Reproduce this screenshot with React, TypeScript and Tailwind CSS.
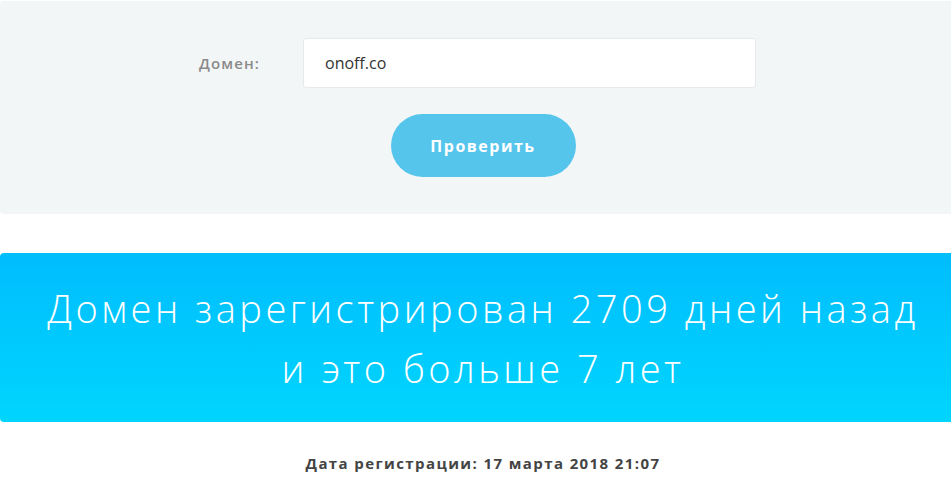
import React from "react";

export default function App() {
  return (
    <div className="w-[951px] h-[487px] overflow-hidden bg-white" style={{ fontFamily: '"Open Sans", "Noto Sans", sans-serif' }}>
      <div className="w-[966px] pt-px">
        <div className="bg-[#f3f6f7] rounded-[4px] h-[213px] flex flex-col items-center pt-[37px]">
          <div className="flex items-center w-[966px]">
            <label className="w-[303px] pl-[199px] text-[15px] font-semibold tracking-[1.1px] text-[#8a8a8a]">Домен:</label>
            <div className="w-[453px] h-[50px] bg-white border border-[#e6eaec] rounded-[3px] flex items-center pl-[21px] text-[16px] text-[#333]">
              onoff.co
            </div>
          </div>
          <button className="mt-[26px] w-[185px] h-[63px] rounded-full bg-[#56c5ec] text-white text-[16px] font-bold tracking-[1.5px]">
            Проверить
          </button>
        </div>
        <div className="mt-[39px] h-[169px] rounded-[4px] bg-gradient-to-b from-[#00bdfe] to-[#00d5fd] flex flex-col items-center justify-center text-white text-[38px] font-light tracking-[3.5px] leading-[60px]">
          <div>Домен зарегистрирован 2709 дней назад</div>
          <div>и это больше 7 лет</div>
        </div>
        <div className="mt-[30px] text-center text-[15px] font-bold tracking-[1.4px] text-[#444]">
          Дата регистрации: 17 марта 2018 21:07
        </div>
      </div>
    </div>
  );
}
